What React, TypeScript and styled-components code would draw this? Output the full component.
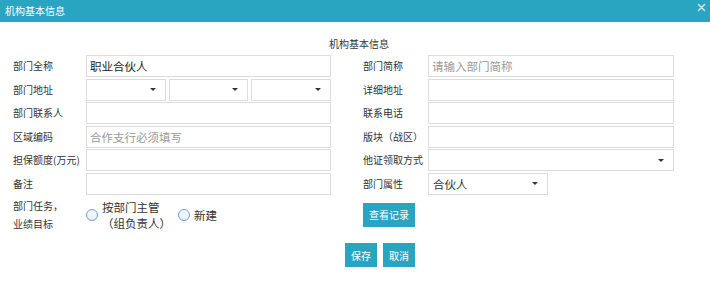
import React from "react";
import styled, { createGlobalStyle } from "styled-components";

const GlobalStyle = createGlobalStyle`
  html, body {
    margin: 0;
    padding: 0;
    background: #fff;
    font-family: "Noto Sans CJK SC", "Noto Sans", sans-serif;
    color: #333;
  }
`;

const MAIN = "#29a5c1";

const Dialog = styled.div`
  width: 710px;
  height: 295px;
  background: #fff;
`;

const TitleBar = styled.div`
  height: 22px;
  background: ${MAIN};
  color: #fff;
  font-size: 10px;
  line-height: 22px;
  padding: 0 4px 0 5px;
  display: flex;
  justify-content: space-between;
  align-items: flex-start;
`;

const CloseBtn = styled.span`
  display: flex;
  padding-top: 3px;
  cursor: pointer;
`;

const Body = styled.div`
  padding: 14px 0 0 13px;
`;

const SectionTitle = styled.div`
  font-size: 10px;
  line-height: 16px;
  text-align: center;
  margin: 0 0 3px 0;
  width: 692px;
`;

const FormGrid = styled.div`
  display: grid;
  grid-template-columns: 73px 245px 97px 246px;
  grid-auto-rows: 22px;
  row-gap: 1.6px;
`;

const Label = styled.div<{ $right?: boolean }>`
  font-size: 10px;
  line-height: 22px;
  white-space: nowrap;
  padding-left: ${(p) => (p.$right ? "32px" : "0")};
`;

const Input = styled.input`
  box-sizing: border-box;
  width: 100%;
  height: 22px;
  margin: 0;
  border: 1px solid #dcdcdc;
  padding: 0 3px;
  font-family: inherit;
  font-size: 11.5px;
  color: #222;
  outline: none;
  background: #fff;

  &::placeholder {
    color: #999;
  }
`;

const SelectGroup = styled.div`
  display: flex;
  gap: 3px;
`;

const Select = styled.div<{ $width?: string }>`
  box-sizing: border-box;
  flex: ${(p) => (p.$width ? `0 0 ${p.$width}` : "1")};
  height: 22px;
  border: 1px solid #dcdcdc;
  display: flex;
  align-items: center;
  justify-content: space-between;
  padding: 0 9px 0 4px;
  font-size: 11.5px;
  color: #333;
  background: #fff;
`;

const Caret = styled.span`
  width: 0;
  height: 0;
  border-left: 3px solid transparent;
  border-right: 3px solid transparent;
  border-top: 3px solid #333;
`;

const TaskRow = styled.div`
  display: grid;
  grid-template-columns: 73px 245px 97px 246px;
  height: 36px;
  margin-top: 1.6px;
  align-items: center;
`;

const TwoLineLabel = styled.div`
  font-size: 10px;
  line-height: 18px;
`;

const RadioGroup = styled.div`
  display: flex;
  align-items: center;
  gap: 7px;
`;

const RadioItem = styled.label`
  display: flex;
  align-items: center;
  gap: 4px;
  font-size: 11.5px;
  line-height: 16px;
  color: #333;
  cursor: pointer;
`;

const RadioCircle = styled.span`
  box-sizing: border-box;
  width: 12px;
  height: 12px;
  border-radius: 50%;
  border: 1px solid #6d9ed6;
  background: linear-gradient(#fbfcfe, #e9eef6);
  flex-shrink: 0;
`;

const Button = styled.button<{ $wide?: boolean }>`
  height: 24px;
  min-width: 32px;
  padding: 0 ${(p) => (p.$wide ? "6px" : "0")};
  border: none;
  background: ${MAIN};
  color: #fff;
  font-family: inherit;
  font-size: 10px;
  cursor: pointer;
`;

const ButtonCell = styled.div`
  padding-left: 32px;
  display: flex;
`;

const Footer = styled.div`
  display: flex;
  justify-content: center;
  gap: 6px;
  margin: 10.5px 0 0 -13px;
  padding-left: 50px;
  width: 710px;
  box-sizing: border-box;
`;

export default function App() {
  return (
    <>
      <GlobalStyle />
      <Dialog>
        <TitleBar>
          <span>机构基本信息</span>
          <CloseBtn>
            <svg width="9" height="9" viewBox="0 0 9 9">
              <path
                d="M1.5 1.5 L7.5 7.5 M7.5 1.5 L1.5 7.5"
                stroke="#d8dde0"
                strokeWidth="1.6"
                strokeLinecap="round"
              />
            </svg>
          </CloseBtn>
        </TitleBar>
        <Body>
          <SectionTitle>机构基本信息</SectionTitle>
          <FormGrid>
            <Label>部门全称</Label>
            <Input defaultValue="职业合伙人" />
            <Label $right>部门简称</Label>
            <Input placeholder="请输入部门简称" />

            <Label>部门地址</Label>
            <SelectGroup>
              <Select>
                <span />
                <Caret />
              </Select>
              <Select>
                <span />
                <Caret />
              </Select>
              <Select>
                <span />
                <Caret />
              </Select>
            </SelectGroup>
            <Label $right>详细地址</Label>
            <Input />

            <Label>部门联系人</Label>
            <Input />
            <Label $right>联系电话</Label>
            <Input />

            <Label>区域编码</Label>
            <Input placeholder="合作支行必须填写" />
            <Label $right>版块（战区）</Label>
            <Input />

            <Label>担保额度(万元)</Label>
            <Input />
            <Label $right>他证领取方式</Label>
            <SelectGroup>
              <Select>
                <span />
                <Caret />
              </Select>
            </SelectGroup>

            <Label>备注</Label>
            <Input />
            <Label $right>部门属性</Label>
            <SelectGroup>
              <Select $width="120px">
                <span>合伙人</span>
                <Caret />
              </Select>
            </SelectGroup>
          </FormGrid>

          <TaskRow>
            <TwoLineLabel>
              部门任务，
              <br />
              业绩目标
            </TwoLineLabel>
            <RadioGroup>
              <RadioItem>
                <RadioCircle />
                <span>
                  按部门主管
                  <br />
                  （组负责人）
                </span>
              </RadioItem>
              <RadioItem>
                <RadioCircle />
                <span>新建</span>
              </RadioItem>
            </RadioGroup>
            <ButtonCell>
              <Button $wide>查看记录</Button>
            </ButtonCell>
          </TaskRow>

          <Footer>
            <Button>保存</Button>
            <Button>取消</Button>
          </Footer>
        </Body>
      </Dialog>
    </>
  );
}
